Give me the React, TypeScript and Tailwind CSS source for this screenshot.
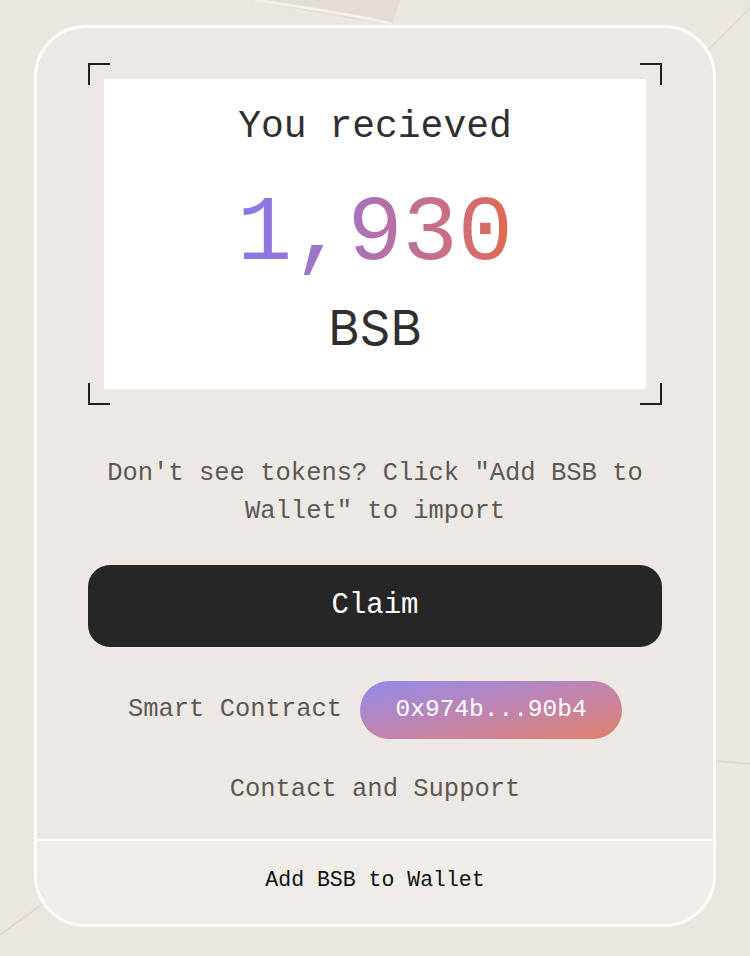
import React from 'react';

const mono = { fontFamily: '"Liberation Mono", "DejaVu Sans Mono", monospace' };

const Corner: React.FC<{ className: string }> = ({ className }) => (
    <span className={`absolute h-[22px] w-[22px] border-[#1f1f1f] ${className}`} />
);

const Backdrop: React.FC = () => (
    <svg className="pointer-events-none absolute inset-0 h-full w-full" viewBox="0 0 750 956" preserveAspectRatio="none">
        <path d="M250 0 C300 10 360 20 392 26 L400 0 Z" fill="#e3ddd5" />
        <path d="M255 0 C310 8 360 16 392 24" stroke="#f3efea" strokeWidth="3" fill="none" />
        <path d="M700 58 L750 8" stroke="#ddd5cc" strokeWidth="1.5" />
        <path d="M0 935 L48 900" stroke="#ddd5cc" strokeWidth="1.5" />
        <path d="M716 761 L750 764" stroke="#ddd5cc" strokeWidth="1.5" />
    </svg>
);

export default function App() {
    return (
        <div className="relative flex min-h-[956px] w-full justify-center overflow-hidden bg-[#ebe6e0] pt-[25px]" style={mono}>
            <Backdrop />
            <div className="relative flex h-[902px] w-[682px] flex-col overflow-hidden rounded-[52px] border-[3px] border-white bg-[#ede8e3]">
                <div className="flex flex-1 flex-col items-center px-[51px] pt-[35px]">
                    <div className="relative w-full p-4">
                        <Corner className="left-0 top-0 border-l-2 border-t-2" />
                        <Corner className="right-0 top-0 border-r-2 border-t-2" />
                        <Corner className="bottom-0 left-0 border-b-2 border-l-2" />
                        <Corner className="bottom-0 right-0 border-b-2 border-r-2" />
                        <div className="flex h-[310px] flex-col items-center bg-white pt-[26px]">
                            <div className="text-[38px] leading-[44px] text-[#2f2f2f]">You recieved</div>
                            <div className="mt-[36px] bg-gradient-to-r from-[#8677ec] via-[#b070b0] to-[#e2684c] bg-clip-text text-[92px] leading-[100px] text-transparent">
                                1,930
                            </div>
                            <div
                                className="mt-[15px] text-[48px] leading-[56px] text-[#2f2f2f]"
                                style={{ fontFamily: 'Inter, Roboto, sans-serif' }}
                            >
                                BSB
                            </div>
                        </div>
                    </div>
                    <p className="mt-[50px] text-center text-[25.5px] leading-[38px] text-[#5d5853]">
                        Don't see tokens? Click "Add BSB to Wallet" to import
                    </p>
                    <button className="mt-[34px] h-[82px] w-full rounded-[22px] bg-[#262626] text-[29px] text-white">
                        Claim
                    </button>
                    <div className="mt-[34px] flex items-center gap-[18px]">
                        <span className="text-[25.5px] text-[#5d5853]">Smart Contract</span>
                        <span className="flex h-[58px] w-[262px] items-center justify-center rounded-full bg-gradient-to-br from-[#9189ea] via-[#c084b0] to-[#e07f66] text-[24.5px] text-white">
                            0x974b...90b4
                        </span>
                    </div>
                    <div className="mt-[32px] text-[25.5px] text-[#5d5853]">Contact and Support</div>
                </div>
                <div className="flex h-[85px] items-center justify-center border-t-2 border-white bg-[#f0ece8] pb-[4px] text-[21.5px] text-[#111]">
                    Add BSB to Wallet
                </div>
            </div>
        </div>
    );
}
